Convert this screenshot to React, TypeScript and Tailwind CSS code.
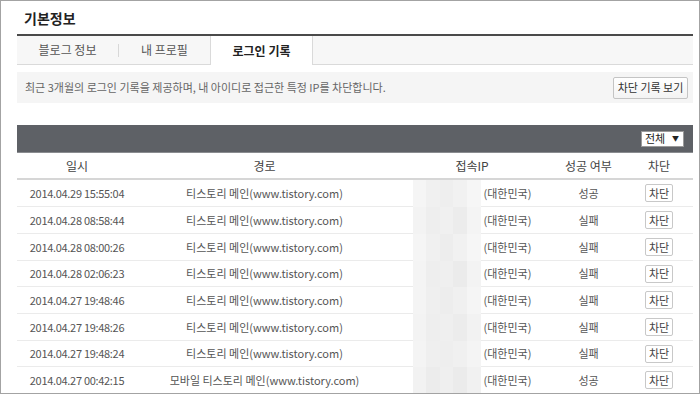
const rows = [
  { date: '2014.04.29 15:55:04', path: '티스토리 메인(www.tistory.com)', ok: '성공', h: 'h-[27px]' },
  { date: '2014.04.28 08:58:44', path: '티스토리 메인(www.tistory.com)', ok: '실패', h: 'h-[27px]' },
  { date: '2014.04.28 08:00:26', path: '티스토리 메인(www.tistory.com)', ok: '실패', h: 'h-[27px]' },
  { date: '2014.04.28 02:06:23', path: '티스토리 메인(www.tistory.com)', ok: '실패', h: 'h-[26px]' },
  { date: '2014.04.27 19:48:46', path: '티스토리 메인(www.tistory.com)', ok: '실패', h: 'h-[27px]' },
  { date: '2014.04.27 19:48:26', path: '티스토리 메인(www.tistory.com)', ok: '실패', h: 'h-[27px]' },
  { date: '2014.04.27 19:48:24', path: '티스토리 메인(www.tistory.com)', ok: '실패', h: 'h-[26px]' },
  { date: '2014.04.27 00:42:15', path: '모바일 티스토리 메인(www.tistory.com)', ok: '성공', h: 'h-[27px]' },
]

// blurred IP mosaic, one set of grays per row
const mosaic = [
  ['#f5f5f5', '#f0f0f0', '#eeeeee', '#f1f1f1', '#f6f6f6'],
  ['#f3f3f3', '#eeeeee', '#f0f0f0', '#ececec', '#f4f4f4'],
  ['#f5f5f5', '#f0f0f0', '#ededed', '#f1f1f1', '#f6f6f6'],
  ['#f4f4f4', '#eeeeee', '#efefef', '#ebebeb', '#f3f3f3'],
  ['#f4f4f4', '#efefef', '#ededed', '#f0f0f0', '#f5f5f5'],
  ['#f3f3f3', '#eeeeee', '#efefef', '#ececec', '#f2f2f2'],
  ['#f4f4f4', '#efefef', '#eeeeee', '#f0f0f0', '#f4f4f4'],
  ['#f2f2f2', '#ececec', '#efefef', '#ebebeb', '#f1f1f1'],
]

export default function App() {
  return (
    <div className="w-[700px] h-[394px] overflow-hidden bg-white border border-[#a3a3a3] pl-[16px] pr-[6px] font-['Noto_Sans_CJK_KR',sans-serif] text-[#555]">
      {/* Title */}
      <div className="h-[33px] flex items-center pl-[7px] pt-[1px] text-[14px] font-bold text-[#222]">기본정보</div>
      <div className="h-[2px] bg-[#4a4a4a]" />

      {/* Tabs */}
      <div className="h-[29px] bg-[#f7f7f7] border-b border-[#dadada] flex text-[12px]">
        <div className="w-[101px] flex items-center justify-center">블로그 정보</div>
        <div className="w-px h-[13px] self-center bg-[#d8d8d8]" />
        <div className="w-[91px] flex items-center justify-center">내 프로필</div>
        <div className="w-[103px] h-[29px] -mb-px bg-white border-x border-[#dadada] flex items-center justify-center font-bold text-[#222]">
          로그인 기록
        </div>
      </div>

      {/* Notice */}
      <div className="mt-[7px] h-[31px] bg-[#f5f5f5] flex items-center justify-between pl-[8px] pr-[5px]">
        <p className="text-[11px] text-[#666]">최근 3개월의 로그인 기록을 제공하며, 내 아이디로 접근한 특정 IP를 차단합니다.</p>
        <button className="h-[22px] w-[75px] border border-[#c4c4c4] rounded-[2px] bg-gradient-to-b from-white to-[#f3f3f3] text-[11px] text-[#333]">
          차단 기록 보기
        </button>
      </div>

      {/* Filter bar */}
      <div className="mt-[22px] h-[28px] bg-[#5e6166] border-b border-[#8a8c90] flex items-center justify-end pr-[9px]">
        <div className="w-[43px] h-[16px] bg-white border border-[#9a9a9a] flex items-center justify-between pl-[3px] pr-[4px] text-[11px] text-[#222] leading-none">
          <span>전체</span>
          <span className="text-[7px]">▼</span>
        </div>
      </div>

      {/* Header */}
      <div className="h-[27px] border-b-2 border-[#d6d6d6] flex items-center text-[12px] text-[#444]">
        <div className="w-[120px] text-center">일시</div>
        <div className="w-[255px] text-center">경로</div>
        <div className="w-[160px] text-center">접속IP</div>
        <div className="w-[73px] text-center">성공 여부</div>
        <div className="flex-1 text-center">차단</div>
      </div>

      {/* Rows */}
      {rows.map((r, i) => (
        <div key={i} className={`${r.h} border-b border-[#ebebeb] flex items-center text-[11px] text-[#555]`}>
          <div className="w-[120px] text-center tracking-[-0.3px]">{r.date}</div>
          <div className="w-[255px] text-center">{r.path}</div>
          <div className="w-[160px] self-stretch flex items-center justify-center">
            <div className="w-[68px] self-stretch -mb-px flex">
              {mosaic[i].map((c, j) => (
                <div key={j} className="flex-1" style={{ backgroundColor: c }} />
              ))}
            </div>
            <span className="ml-[3px]">(대한민국)</span>
          </div>
          <div className="w-[73px] text-center">{r.ok}</div>
          <div className="flex-1 flex justify-center">
            <button className="h-[18px] px-[3px] border border-[#c8c8c8] rounded-[2px] bg-white text-[11px] leading-none text-[#444]">차단</button>
          </div>
        </div>
      ))}
    </div>
  )
}
